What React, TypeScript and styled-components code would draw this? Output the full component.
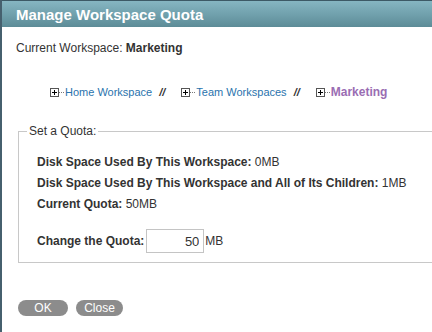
import React from "react";
import styled, { createGlobalStyle } from "styled-components";

const GlobalStyle = createGlobalStyle`
  html, body {
    margin: 0;
    padding: 0;
    background: #ffffff;
    overflow: hidden;
  }
  body {
    font-family: "Liberation Sans", Arial, sans-serif;
    color: #333333;
  }
`;

const Dialog = styled.div`
  width: 432px;
  height: 332px;
  border-left: 2px solid #46606e;
  box-sizing: border-box;
  overflow: hidden;
  display: flex;
  flex-direction: column;
`;

const TitleBar = styled.div`
  height: 27px;
  border-top: 1px solid #3d5a66;
  box-sizing: border-box;
  background: linear-gradient(to bottom, #86b6c2 0%, #6f9fab 55%, #5d8c97 100%);
  padding-left: 14px;
  display: flex;
  align-items: center;
  color: #ffffff;
  font-size: 15px;
  font-weight: bold;
`;

const Body = styled.div`
  padding: 14px 0 0 14px;
  display: flex;
  flex-direction: column;
`;

const CurrentLine = styled.div`
  font-size: 12px;
  line-height: 14px;
  b {
    font-weight: bold;
  }
`;

const Crumbs = styled.div`
  margin-top: 31px;
  padding-left: 34px;
  display: flex;
  align-items: center;
  font-size: 11px;
  line-height: 13px;
`;

const Crumb = styled.span`
  display: inline-flex;
  align-items: center;
`;

const PlusBox = styled.span`
  width: 7px;
  height: 7px;
  border: 1px solid #555;
  position: relative;
  flex-shrink: 0;
  &::before,
  &::after {
    content: "";
    position: absolute;
    background: #000;
  }
  &::before {
    left: 1px;
    top: 3px;
    width: 5px;
    height: 1px;
  }
  &::after {
    left: 3px;
    top: 1px;
    width: 1px;
    height: 5px;
  }
`;

const Dots = styled.span`
  width: 5px;
  border-top: 1px dotted #777;
  margin: 0 1px 0 0;
`;

const CrumbLink = styled.span<{ $current?: boolean }>`
  color: ${(p) => (p.$current ? "#9a6db3" : "#2a73ad")};
  font-weight: ${(p) => (p.$current ? "bold" : "normal")};
  font-size: ${(p) => (p.$current ? "12px" : "11px")};
`;

const Sep = styled.span`
  font-style: italic;
  font-weight: bold;
  color: #333;
  margin: 0 16px 0 7px;
`;

const Fieldset = styled.fieldset`
  margin: 25px 0 0 2px;
  width: 440px;
  border: 1px solid #c8c8c8;
  border-right: none;
  padding: 17px 0 9px 18px;
  display: flex;
  flex-direction: column;
  gap: 7px;
`;

const Legend = styled.legend`
  font-size: 12px;
  padding: 0 2px;
  margin-left: -10px;
  color: #333;
`;

const InfoRow = styled.div`
  font-size: 12px;
  line-height: 14px;
  b {
    font-weight: bold;
  }
`;

const QuotaRow = styled.div`
  margin-top: 11px;
  display: flex;
  align-items: center;
  font-size: 12px;
  b {
    font-weight: bold;
    margin-right: 2px;
  }
`;

const QuotaInput = styled.input`
  width: 58px;
  height: 24px;
  box-sizing: border-box;
  border: 1px solid #c4c4c4;
  font-family: "Liberation Sans", Arial, sans-serif;
  font-size: 13px;
  color: #333;
  text-align: right;
  padding: 0 4px;
  margin-right: 1px;
  outline: none;
`;

const Buttons = styled.div`
  margin-top: 37px;
  padding-left: 2px;
  display: flex;
  gap: 8px;
`;

const PillButton = styled.button<{ $w: number }>`
  width: ${(p) => p.$w}px;
  height: 16px;
  border: none;
  border-radius: 8px;
  background: #8c8c8c;
  color: #ffffff;
  font-family: "Liberation Sans", Arial, sans-serif;
  font-size: 12px;
  padding: 0;
  line-height: 16px;
`;

const crumbs = [
  { label: "Home Workspace" },
  { label: "Team Workspaces" },
  { label: "Marketing", current: true },
];

const App = (): JSX.Element => {
  return (
    <React.Fragment>
      <GlobalStyle />
      <Dialog>
        <TitleBar>Manage Workspace Quota</TitleBar>
        <Body>
          <CurrentLine>
            Current Workspace: <b>Marketing</b>
          </CurrentLine>
          <Crumbs>
            {crumbs.map((c, i) => (
              <React.Fragment key={c.label}>
                <Crumb>
                  <PlusBox />
                  <Dots />
                  <CrumbLink $current={c.current}>{c.label}</CrumbLink>
                </Crumb>
                {i < crumbs.length - 1 ? <Sep>//</Sep> : null}
              </React.Fragment>
            ))}
          </Crumbs>
          <Fieldset>
            <Legend>Set a Quota:</Legend>
            <InfoRow>
              <b>Disk Space Used By This Workspace:</b> 0MB
            </InfoRow>
            <InfoRow>
              <b>Disk Space Used By This Workspace and All of Its Children:</b> 1MB
            </InfoRow>
            <InfoRow>
              <b>Current Quota:</b> 50MB
            </InfoRow>
            <QuotaRow>
              <b>Change the Quota:</b>
              <QuotaInput defaultValue="50" />
              MB
            </QuotaRow>
          </Fieldset>
          <Buttons>
            <PillButton $w={50}>OK</PillButton>
            <PillButton $w={47}>Close</PillButton>
          </Buttons>
        </Body>
      </Dialog>
    </React.Fragment>
  );
};

export default App;
